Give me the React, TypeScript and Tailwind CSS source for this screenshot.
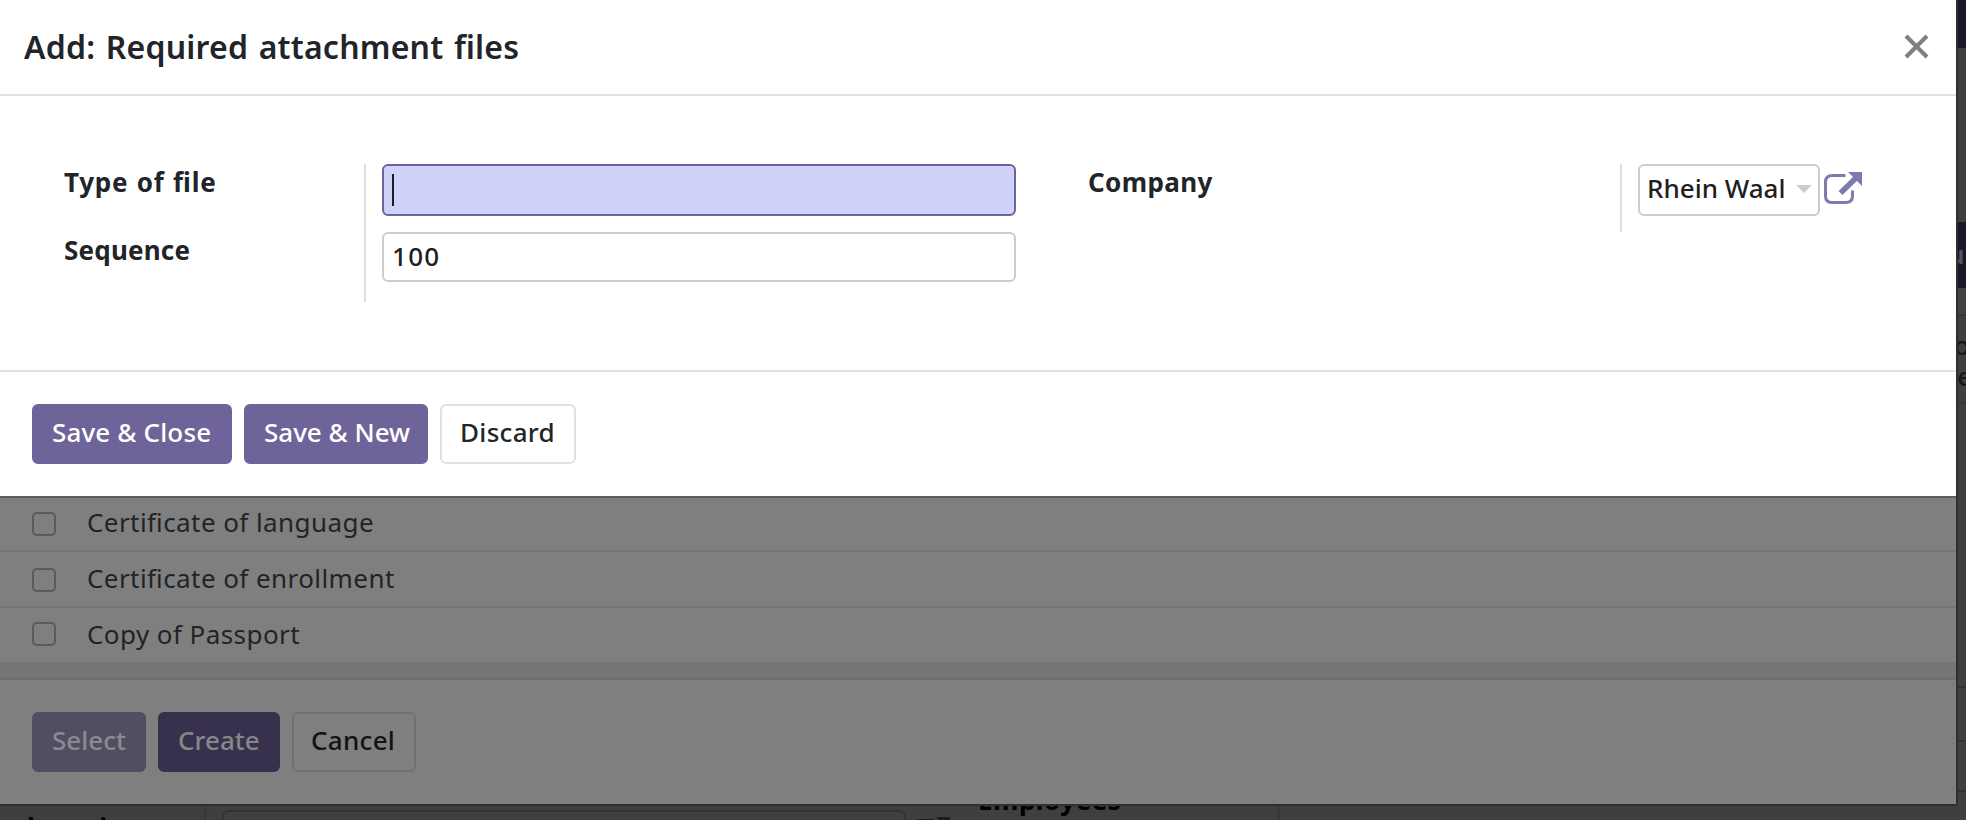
import type { ReactNode } from 'react';

const documents = [
  { name: 'Certificate of language', row: 'h-[56px] border-b-2 pb-[3px]', box: 'mt-[5px]' },
  { name: 'Certificate of enrollment', row: 'h-[56px] border-b-2 pb-[3px]', box: 'mt-[5px]' },
  { name: 'Copy of Passport', row: 'h-[54px] pb-[2px]', box: 'mt-0' },
];

function Button({ className, children }: { className: string; children: ReactNode }) {
  return (
    <button
      className={`flex h-[60px] shrink-0 items-center rounded-[6px] border-2 pb-[4px] font-medium whitespace-nowrap ${className}`}
    >
      {children}
    </button>
  );
}

function ExternalLink({ className }: { className: string }) {
  return (
    <svg className={className} width="38" height="34" viewBox="0 0 38 34" fill="none">
      <path
        d="M21.5 4.5H8.5Q1.5 4.5 1.5 11V25Q1.5 31.5 8 31.5H21.5Q28.5 31.5 28.5 25V19.5"
        stroke="currentColor"
        strokeWidth="3"
      />
      <path d="M16.5 22L32 7" stroke="currentColor" strokeWidth="5.5" />
      <path d="M24 1H38V15Z" fill="currentColor" />
    </svg>
  );
}

function PageBehind() {
  return (
    <div className="flex h-[820px] flex-col justify-between">
      <div className="flex justify-end">
        <div className="flex w-[10px] flex-col overflow-hidden">
          <div className="h-[48px] bg-[#1b1828]" />
          <div className="h-[174px]" />
          <div className="h-[66px] bg-[#1b1828] pt-[14px] font-semibold leading-[36px] text-[#56535f]">
            <span className="-ml-[8px]">ui</span>
          </div>
          <div className="h-[28px] border-b-2 border-[#343434] bg-[#424242]" />
          <div className="h-[88px] border-b-2 border-[#353535] pt-[14px] leading-[31px] font-medium text-[#151719]">
            <div className="-ml-[2px]">o</div>
            <div className="-ml-[8px]">fe</div>
          </div>
          <div className="h-[284px] border-b-2 border-[#323232]" />
          <div className="h-[54px] border-b-2 border-[#323232]" />
          <div className="h-[50px] border-b-2 border-[#323232]" />
        </div>
      </div>
      <div className="flex h-[30px] overflow-hidden font-bold text-black">
        <div className="h-full w-[206px] shrink-0 border-r-2 border-[#373737] pt-[18px] pl-[27px] tracking-[1.6px]">
          location
        </div>
        <div className="mt-[18px] ml-[16px] h-[48px] w-[684px] shrink-0 rounded-[6px] border-2 border-[#333]" />
        <ExternalLink className="mt-[24px] ml-[6px] shrink-0 text-[#1d1a28]" />
        <div className="-mt-[10px] ml-[28px] w-[302px] shrink-0 border-r-2 border-[#373737] tracking-[0.5px]">
          Employees
        </div>
      </div>
    </div>
  );
}

function SelectDialog() {
  return (
    <div className="absolute top-0 left-0 box-content flex h-[804px] w-[1956px] flex-col justify-end border-r-2 border-b-2 border-[#2f2f2f] bg-[#7f7f7f]">
      {documents.map((doc) => (
        <div key={doc.name} className={`flex shrink-0 items-center border-[#757575] pl-[32px] ${doc.row}`}>
          <span className={`size-[24px] rounded-[5px] border-2 border-[#575c61] ${doc.box}`} />
          <span className="ml-[31px] tracking-[0.43px] text-[#212427]">{doc.name}</span>
        </div>
      ))}
      <div className="h-[18px] shrink-0 border-b-2 border-[#6f6f70] bg-[#767676]" />
      <div className="flex h-[124px] shrink-0 items-center gap-[12px] pl-[32px]">
        <Button className="w-[114px] border-[#524d60] bg-[#524d60] pl-[18px] text-[#8b8992]">Select</Button>
        <Button className="w-[122px] border-[#37314e] bg-[#37314e] pl-[18px] text-[#878787]">Create</Button>
        <Button className="w-[124px] border-[#6f7071] pl-[17px] tracking-[0.3px] text-[#111314]">Cancel</Button>
      </div>
    </div>
  );
}

function AddDialog() {
  return (
    <div className="absolute top-0 left-0 box-content flex h-[496px] w-[1956px] flex-col border-b-2 border-[#5c5c5c] bg-white text-[#212529]">
      <header className="flex h-[96px] shrink-0 items-center justify-between border-b-2 border-[#dee2e6] pr-[27px] pl-[24px]">
        <h4 className="pb-[1px] text-[32px] leading-[44px] font-semibold tracking-[0.2px] [word-spacing:2px]">
          Add: Required attachment files
        </h4>
        <svg className="mb-[1px]" width="25" height="25" viewBox="0 0 25 25" stroke="#808080" strokeWidth="4.2">
          <path d="M2 2L23 23M23 2L2 23" />
        </svg>
      </header>
      <main className="flex h-[276px] shrink-0 items-start border-b-2 border-[#dee2e6] pt-[68px] pl-[64px]">
        <div className="flex h-[138px] w-[302px] flex-col border-r-2 border-[#ddd] font-bold">
          <label className="h-[68px] tracking-[0.75px] [word-spacing:1px]">Type of file</label>
          <label className="tracking-[0.2px]">Sequence</label>
        </div>
        <div className="ml-[16px] flex w-[634px] flex-col gap-[16px]">
          <div className="flex h-[52px] items-center rounded-[6px] border-2 border-[#6f6499] bg-[#d1d2fa] pl-[8px]">
            <span className="h-[32px] w-[2px] bg-[#1f1f1f]" />
          </div>
          <div className="flex h-[50px] items-center rounded-[6px] border-2 border-[#ccc] pb-[2px] pl-[8px] font-medium tracking-[1.3px] text-[#1f1f1f]">
            100
          </div>
        </div>
        <div className="ml-[72px] h-[68px] w-[534px] border-r-2 border-[#ddd] font-bold tracking-[0.4px]">
          Company
        </div>
        <div className="ml-[16px] flex h-[52px] w-[182px] items-center justify-between rounded-[6px] border-2 border-[#ccc] pr-[6px] pb-[4px] pl-[7px] font-medium text-[#1f1f1f]">
          Rhein Waal
          <svg className="mt-[2px]" width="16" height="8" viewBox="0 0 16 8" fill="#ccc">
            <path d="M0 0H16L8 8Z" />
          </svg>
        </div>
        <ExternalLink className="mt-[7px] ml-[4px] text-[#7c7bad]" />
      </main>
      <footer className="flex h-[124px] shrink-0 items-center gap-[12px] pl-[32px]">
        <Button className="w-[200px] border-[#6f6499] bg-[#6f6499] pl-[18px] tracking-[0.15px] text-white">
          Save &amp; Close
        </Button>
        <Button className="w-[184px] border-[#6f6499] bg-[#6f6499] pl-[18px] text-white">Save &amp; New</Button>
        <Button className="w-[136px] border-[#dee2e6] pl-[18px] tracking-[0.3px]">Discard</Button>
      </footer>
    </div>
  );
}

export default function App() {
  return (
    <div className="relative h-[820px] w-[1966px] overflow-hidden bg-[#3f3f3f] font-['Noto_Sans','Open_Sans',sans-serif] text-[26px] leading-[36px] [font-feature-settings:'liga'_1]">
      <PageBehind />
      <SelectDialog />
      <AddDialog />
    </div>
  );
}
